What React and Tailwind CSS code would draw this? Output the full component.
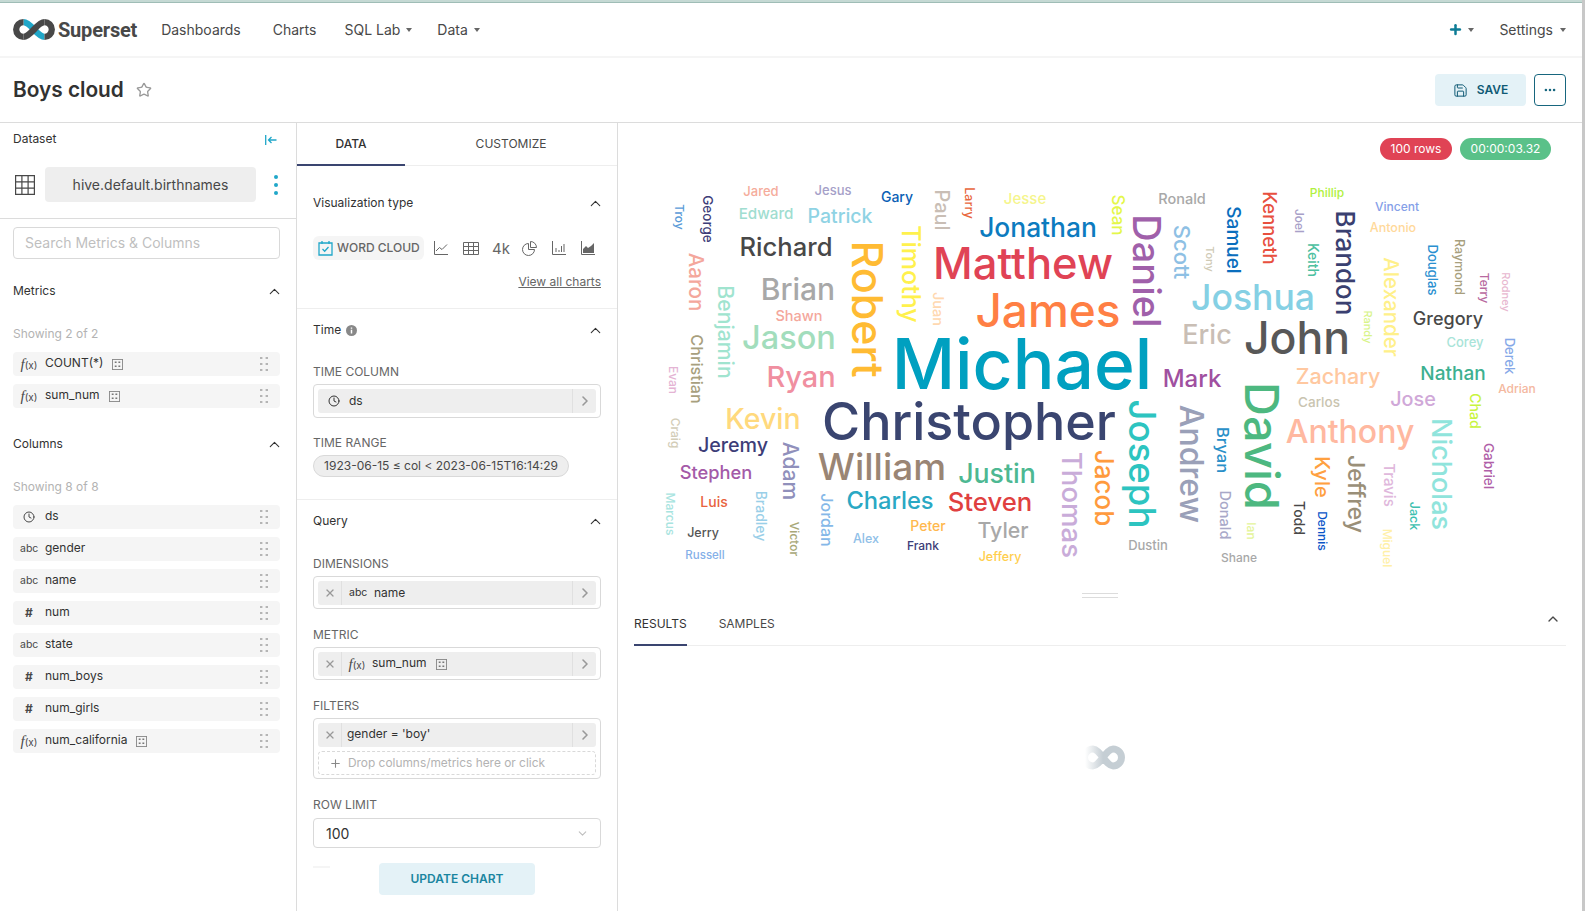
import { ChevronUp, ChevronRight, ChevronDown, Clock, X, Plus, Star, Save, MoreHorizontal } from 'lucide-react'

// text, center x, center y (page coordinates), size, rotated, colour
const words = [
  ['Jared', 761, 191, 13, 0, '#F5AC9B'], ['Jesus', 833, 190, 13, 0, '#A5A0C8'], ['Gary', 897, 197, 14, 0, '#0B5FB5'],
  ['Troy', 679, 217, 12, 1, '#5A9BD8'], ['George', 707, 219, 13.5, 1, '#3D3D78'], ['Edward', 766, 214, 15.2, 0, '#A0DDD0'],
  ['Patrick', 840, 217, 19.5, 0, '#8FD3E4'], ['Paul', 942, 210, 20, 1, '#C9BEB5'], ['Larry', 969, 203, 12.5, 1, '#E8663D'],
  ['Jesse', 1025, 198, 15, 0, '#F5F58C'], ['Sean', 1117, 215, 17, 1, '#E4F74A'], ['Jonathan', 1038, 227, 26.4, 0, '#0C7BBF'],
  ['Richard', 786, 247, 25.6, 0, '#484848'], ['Timothy', 910, 274, 25, 1, '#FFF14D'], ['Robert', 867, 309, 43, 1, '#FFBB33'],
  ['Matthew', 1023, 264, 43.5, 0, '#E04355'], ['Aaron', 696, 282, 20.5, 1, '#F4A79C'], ['Benjamin', 725, 332, 21.2, 1, '#A0E4CF'],
  ['Brian', 798, 289, 30, 0, '#A8A8A8'], ['Juan', 938, 309, 14.5, 1, '#FFD8B0'], ['James', 1048, 310, 46, 0, '#FF7F44'],
  ['Shawn', 799, 316, 14.5, 0, '#F4A79C'], ['Jason', 789, 338, 32.5, 0, '#A2DDBC'], ['Christian', 697, 369, 16.2, 1, '#A89F7E'],
  ['Evan', 673, 380, 12, 1, '#E4B4D4'], ['Michael', 1022, 365, 69.5, 0, '#00A0C0'], ['Ryan', 801, 376, 29, 0, '#F08FA0'],
  ['Kevin', 763, 419, 28.5, 0, '#FFD97D'], ['Craig', 675, 433, 12, 1, '#D3CDB8'], ['Christopher', 969, 422, 52, 0, '#3A4570'],
  ['Jeremy', 733, 446, 19.7, 0, '#3D3D78'], ['Adam', 790, 471, 21, 1, '#9090BB'], ['William', 882, 466, 37, 0, '#9A8574'],
  ['Justin', 997, 473, 26.7, 0, '#4DB892'], ['Stephen', 716, 472, 18.3, 0, '#A45AA8'], ['Thomas', 1071, 505, 27.6, 1, '#C9ACD9'],
  ['Jacob', 1104, 488, 26, 1, '#FF9A3D'], ['Charles', 890, 501, 23.7, 0, '#2AA8C4'], ['Steven', 990, 502, 25.7, 0, '#E04040'],
  ['Marcus', 670, 514, 12, 1, '#A8E4E0'], ['Luis', 714, 502, 14, 0, '#E8623D'], ['Bradley', 761, 516, 14, 1, '#9ACFE8'],
  ['Jordan', 827, 520, 16, 1, '#85B8E8'], ['Peter', 928, 526, 14, 0, '#FFB84D'], ['Tyler', 1003, 531, 21.3, 0, '#A8A8A8'],
  ['Jerry', 703, 533, 12.5, 0, '#555555'], ['Alex', 866, 539, 12.5, 0, '#8FC0E8'], ['Victor', 794, 539, 12, 1, '#A8A878'],
  ['Frank', 923, 546, 12, 0, '#3D3D78'], ['Russell', 705, 556, 11.5, 0, '#85B0E8'], ['Jeffery', 1000, 557, 12.5, 0, '#FFCE4D'],
  ['Ronald', 1182, 199, 14.5, 0, '#A8A8A8'], ['Daniel', 1147, 271, 38, 1, '#A060AA'], ['Scott', 1182, 252, 22, 1, '#8EC0E4'],
  ['Tony', 1209, 259, 11, 1, '#CFCAB5'], ['Samuel', 1233, 240, 19, 1, '#0A6EBD'], ['Kenneth', 1270, 228, 18.5, 1, '#E8503F'],
  ['Joel', 1299, 221, 12, 1, '#A8A0C8'], ['Keith', 1313, 260, 14, 1, '#4DC0A0'], ['Phillip', 1327, 193, 12, 0, '#B0F040'],
  ['Brandon', 1345, 263, 26, 1, '#3A4070'], ['Vincent', 1397, 207, 12, 0, '#85A0E8'], ['Antonio', 1393, 228, 12.5, 0, '#FFD99A'],
  ['Alexander', 1391, 307, 20.5, 1, '#FFF08A'], ['Randy', 1367, 327, 11, 1, '#D8F48A'], ['Douglas', 1432, 270, 13, 1, '#2A90D0'],
  ['Raymond', 1459, 267, 12.5, 1, '#A89F7E'], ['Terry', 1484, 288, 12, 1, '#B86AA0'], ['Rodney', 1505, 292, 11, 1, '#E8B8D0'],
  ['Joshua', 1253, 298, 35.6, 0, '#85D0E4'], ['Gregory', 1448, 319, 18, 0, '#484848'], ['Eric', 1207, 334, 27, 0, '#C9BEB5'],
  ['John', 1297, 338, 44.6, 0, '#585858'], ['Corey', 1465, 342, 13, 0, '#A8E4D8'], ['Derek', 1509, 356, 13, 1, '#85A8E8'],
  ['Nathan', 1453, 373, 19, 0, '#3DB090'], ['Mark', 1192, 379, 24, 0, '#A050A0'], ['Zachary', 1338, 377, 21.5, 0, '#FFC8A0'],
  ['Adrian', 1517, 389, 12, 0, '#F4B8A0'], ['Carlos', 1319, 403, 13.5, 0, '#C9C4B0'], ['Jose', 1413, 400, 19.8, 0, '#D0A8D8'],
  ['Chad', 1475, 411, 14, 1, '#C8F440'], ['David', 1262, 446, 47, 1, '#4DB880'], ['Joseph', 1142, 464, 36.6, 1, '#2DC4C0'],
  ['Andrew', 1191, 464, 32, 1, '#9AA0B8'], ['Bryan', 1223, 450, 16.5, 1, '#2A90C8'], ['Anthony', 1350, 432, 32, 0, '#FFB8A0'],
  ['Nicholas', 1441, 474, 27, 1, '#90E4DC'], ['Gabriel', 1488, 466, 13.5, 1, '#B060A8'], ['Kyle', 1322, 477, 20, 1, '#FFA040'],
  ['Jeffrey', 1355, 494, 23, 1, '#9A8F78'], ['Travis', 1389, 485, 15, 1, '#E0B8DC'], ['Donald', 1225, 515, 14.5, 1, '#A8A8C8'],
  ['Ian', 1251, 531, 12, 1, '#E4F49A'], ['Todd', 1299, 518, 14, 1, '#484848'], ['Dennis', 1322, 531, 12, 1, '#0A55C8'],
  ['Jack', 1414, 516, 12.5, 1, '#3DC0B0'], ['Miguel', 1387, 548, 12, 1, '#FFF0A8'], ['Dustin', 1148, 545, 13, 0, '#A8A8A8'],
  ['Shane', 1239, 558, 12, 0, '#A8A8A8'],
]

const columns = [
  ['clock', 'ds'], ['abc', 'gender'], ['abc', 'name'], ['#', 'num'], ['abc', 'state'], ['#', 'num_boys'], ['#', 'num_girls'], ['fx', 'num_california', true],
]

const Logo = ({ className }) => (
  <svg viewBox="0 0 42 20" className={className} fill="none" strokeWidth="6">
    <path d="M11 3C18 3 24 17 31 17" stroke="#20A7C9" />
    <path d="M11 17C18 17 24 3 31 3" stroke="#484848" />
    <path d="M11 3A7 7 0 0 0 11 17M31 3A7 7 0 0 1 31 17" stroke="#484848" />
  </svg>
)

const Spinner = () => (
  <svg viewBox="0 0 44 25" className="w-[44px] h-[25px]" fill="none" strokeWidth="7">
    <defs>
      <linearGradient id="fade" gradientUnits="userSpaceOnUse" x1="4" y1="0" x2="22" y2="0">
        <stop offset="0" stopColor="#ffffff" />
        <stop offset="1" stopColor="#c5ced4" />
      </linearGradient>
    </defs>
    <path d="M12 4C19 4 25 21 32 21A8.5 8.5 0 0 0 32 4C25 4 19 21 12 21A8.5 8.5 0 0 1 12 4" stroke="url(#fade)" />
  </svg>
)

const Caret = ({ className = 'ml-[6px]' }) => <span className={`${className} inline-block border-x-[3px] border-t-[4px] border-x-transparent border-t-[#666]`} />

const TableBadge = () => (
  <svg viewBox="0 0 12 12" className="w-[11px] h-[11px] shrink-0" fill="none">
    <rect x="0.5" y="0.5" width="11" height="11" stroke="#888" />
    <path d="M3 3.5h2M7 3.5h2M3 8h2M7 8h2" stroke="#777" strokeWidth="1.6" />
  </svg>
)

const Dots = () => (
  <svg viewBox="0 0 8 14" className="w-[8px] h-[14px]" fill="#b5b5b5">
    {[1, 7, 13].map((y) => (
      <g key={y}>
        <rect x="0" y={y - 1} width="2.4" height="2" />
        <rect x="5.6" y={y - 1} width="2.4" height="2" />
      </g>
    ))}
  </svg>
)

const Fx = () => (
  <span className="flex items-baseline text-[#484848] leading-none w-[18px] justify-center">
    <i className="font-['Liberation_Serif',serif] text-[15px]">f</i>
    <span className="text-[10px]">(x)</span>
  </span>
)

const TypeIcon = ({ type }) => {
  if (type === 'clock') return <span className="w-[18px] flex justify-center"><Clock className="w-[12px] h-[12px] text-[#484848]" /></span>
  if (type === 'abc') return <span className="w-[18px] text-center text-[10.5px] text-[#484848]">abc</span>
  if (type === '#') return <span className="w-[18px] text-center text-[12px] font-bold text-[#484848]">#</span>
  return <Fx />
}

const ListRow = ({ type, name, badge }) => (
  <div className="h-[24px] rounded-[4px] bg-[#f5f5f5] flex items-center pl-[7px] pr-[12px] text-[12px] text-[#323232]">
    <TypeIcon type={type} />
    <span className="ml-[7px] -mt-[2px]">{name}</span>
    {badge && <span className="ml-[9px]"><TableBadge /></span>}
    <span className="ml-auto"><Dots /></span>
  </div>
)

const SectionHead = ({ title, extra }) => (
  <div className="flex items-center justify-between h-[16px] text-[12px] text-[#323232]">
    <span className="flex items-center gap-[5px]">{title}{extra}</span>
    <ChevronUp className="w-[17px] h-[17px] -mr-[3px] text-[#323232]" strokeWidth={1.5} />
  </div>
)

const Label = ({ children, className = '' }) => (
  <div className={`h-[16px] leading-[16px] text-[12px] text-[#666] uppercase ${className}`}>{children}</div>
)

const Pill = ({ children, close }) => (
  <div className="h-[24px] rounded-[3px] bg-[#eeeeee] flex items-center text-[12px] text-[#323232]">
    {close && (
      <span className="w-[24px] h-full flex items-center justify-center border-r border-[#e0e0e0]">
        <X className="w-[12px] h-[12px] text-[#999]" strokeWidth={2.5} />
      </span>
    )}
    <div className="flex-1 flex items-center min-w-0">{children}</div>
    <span className="w-[24px] h-full flex items-center justify-center border-l border-[#e0e0e0]">
      <ChevronRight className="w-[16px] h-[16px] text-[#999]" strokeWidth={2.4} />
    </span>
  </div>
)

const Box = ({ children, className = '' }) => (
  <div className={`border border-[#d9d9d9] rounded-[4px] p-[4px] ${className}`}>{children}</div>
)

const ChartIcons = () => (
  <>
    <svg viewBox="0 0 14 14" className="w-[14px] h-[14px]" fill="none" stroke="#666" strokeWidth="1">
      <path d="M.5 0V13.5H14M2 10L5.5 6.5 8 8.5 13 3.5" />
    </svg>
    <svg viewBox="0 0 16 13" className="w-[16px] h-[13px]" fill="none" stroke="#666" strokeWidth="1">
      <path d="M.5.5h15v12H.5zM.5 4.5h15M.5 8.5h15M5.5.5v12M10.5.5v12" />
    </svg>
    <span className="-ml-[2px] text-[15px] text-[#666] leading-none w-[16px]">4k</span>
    <svg viewBox="0 0 15 15" className="-ml-[1px] w-[15px] h-[15px]" fill="none" stroke="#666" strokeWidth="1">
      <path d="M6.5 2.5A6 6 0 1 0 12.5 8.5H6.5z" />
      <path d="M8.5.5A6 6 0 0 1 14.5 6.5H8.5z" />
    </svg>
    <svg viewBox="0 0 14 14" className="w-[14px] h-[14px]" fill="none" stroke="#666" strokeWidth="1">
      <path d="M.5 0V13.5H14M4 11V7M7 11V9M9.5 11V5M12 11V3" />
    </svg>
    <svg viewBox="0 0 14 14" className="w-[14px] h-[14px]" fill="none" stroke="#666" strokeWidth="1">
      <path d="M.5 0V13.5H14" />
      <path d="M2 12V8L5 5 7 7 10 5 13 2V12z" fill="#666" stroke="none" />
    </svg>
  </>
)

const CalendarCheck = () => (
  <svg viewBox="0 0 15 16" className="w-[15px] h-[16px]" fill="none" stroke="#20A7C9" strokeWidth="1.3">
    <path d="M1 3h13v12H1zM4 1v3M11 1v3M4.5 9l2.2 2.2L10.5 7" />
  </svg>
)

const InfoDot = () => (
  <svg viewBox="0 0 12 12" className="w-[11px] h-[11px]">
    <circle cx="6" cy="6" r="6" fill="#888" />
    <path d="M6 5.2V9.2M6 2.8V4" stroke="#fff" strokeWidth="1.6" />
  </svg>
)

export default function App() {
  return (
    <div className="h-[911px] w-full overflow-hidden bg-white font-[Inter,sans-serif] text-[#323232]">
      <div className="h-full border-r-[3px] border-[#c8c8c8] mr-0 flex flex-col">
        {/* Nav */}
        <div className="h-[3px] bg-[#c5d9d4] border-b border-[#9fbdb6]" />
        <header className="h-[53px] flex items-center pl-[12px] pr-[16px] text-[14px] text-[#484848] shrink-0">
          <Logo className="w-[44px] h-[21px]" />
          <span className="ml-[2px] font-[Roboto,sans-serif] font-bold text-[20px] tracking-[-0.2px]">Superset</span>
          <nav className="flex items-center ml-[24px]">
            <span>Dashboards</span>
            <span className="ml-[32px]">Charts</span>
            <span className="ml-[28px] flex items-center">SQL Lab<Caret /></span>
            <span className="ml-[25px] flex items-center">Data<Caret /></span>
          </nav>
          <div className="ml-auto flex items-center">
            <Plus className="w-[15px] h-[15px] text-[#0E7C96]" strokeWidth={4} />
            <Caret className="ml-[5px]" />
            <span className="ml-[25px] flex items-center">Settings<Caret className="ml-[7px]" /></span>
          </div>
        </header>
        <div className="h-[2px] bg-[#f5f5f5] shrink-0" />

        {/* Title bar */}
        <div className="h-[65px] border-b border-[#dcdcdc] flex items-center pl-[13px] pr-[16px] shrink-0">
          <h1 className="text-[20.8px] font-semibold text-[#323232]">Boys cloud</h1>
          <Star className="ml-[12px] w-[16px] h-[16px] text-[#999]" strokeWidth={2} />
          <button className="ml-auto w-[91px] h-[32px] rounded-[4px] bg-[#e4f2f7] flex items-center justify-center gap-[9px] text-[12px] font-semibold text-[#0f5a75]">
            <Save className="w-[15px] h-[15px]" strokeWidth={1.6} />
            SAVE
          </button>
          <button className="ml-[8px] w-[32px] h-[32px] rounded-[4px] border border-[#17667e] flex items-center justify-center">
            <MoreHorizontal className="w-[14px] h-[14px] text-[#17667e]" strokeWidth={2.4} />
          </button>
        </div>

        <div className="flex flex-1 min-h-0">
          {/* Dataset panel */}
          <aside className="w-[297px] shrink-0 border-r border-[#dcdcdc]">
            <div className="h-[96px] border-b border-[#dcdcdc] pl-[13px] pr-[16px] pt-[8px]">
              <div className="flex items-center justify-between h-[16px] text-[12px]">
                <span>Dataset</span>
                <svg viewBox="0 0 12 10" className="w-[12px] h-[10px] mr-[3px] mt-[2px]" fill="none" stroke="#20A7C9" strokeWidth="1.3">
                  <path d="M.7 0V10M11.5 5H3.5M6.5 2L3.5 5l3 3" />
                </svg>
              </div>
              <div className="flex items-center mt-[20px]">
                <svg viewBox="0 0 20 20" className="ml-[2px] w-[20px] h-[20px]" fill="none" stroke="#484848" strokeWidth="1.2">
                  <path d="M.6.6h18.8v18.8H.6zM.6 6.9h18.8M.6 13.1h18.8M6.9.6v18.8M13.1.6v18.8" />
                </svg>
                <div className="ml-[10px] w-[211px] h-[35px] rounded-[4px] bg-[#eeeeee] flex items-center justify-center text-[14px] text-[#484848]">
                  hive.default.birthnames
                </div>
                <div className="ml-[18px] flex flex-col gap-[4px]">
                  {[0, 1, 2].map((i) => <span key={i} className="w-[4px] h-[4px] rounded-full bg-[#20A7C9]" />)}
                </div>
              </div>
            </div>
            <div className="pl-[13px] pr-[16px]">
              <div className="mt-[8px] h-[32px] border border-[#d9d9d9] rounded-[4px] flex items-center px-[11px] pb-[2px] text-[14px] text-[#bfbfbf]">
                Search Metrics &amp; Columns
              </div>
              <div className="mt-[24px]"><SectionHead title="Metrics" /></div>
              <div className="mt-[27px] h-[16px] leading-[16px] text-[12px] text-[#b3b3b3]">Showing 2 of 2</div>
              <div className="mt-[10px] flex flex-col gap-[8px]">
                <ListRow type="fx" name="COUNT(*)" badge />
                <ListRow type="fx" name="sum_num" badge />
              </div>
              <div className="mt-[28px]"><SectionHead title="Columns" /></div>
              <div className="mt-[27px] h-[16px] leading-[16px] text-[12px] text-[#b3b3b3]">Showing 8 of 8</div>
              <div className="mt-[10px] flex flex-col gap-[8px]">
                {columns.map(([type, name, badge]) => <ListRow key={name} type={type} name={name} badge={badge} />)}
              </div>
            </div>
          </aside>

          {/* Controls panel */}
          <section className="w-[321px] shrink-0 border-r border-[#dcdcdc] relative">
            <div className="flex h-[43px] border-b border-[#eeeeee] text-[12px]">
              <div className="w-[108px] h-[43px] flex items-center justify-center border-b-2 border-[#3A4570] font-medium">DATA</div>
              <div className="flex-1 flex items-center justify-center text-[#484848]">CUSTOMIZE</div>
            </div>
            <div className="px-[16px]">
              <div className="mt-[29px]"><SectionHead title="Visualization type" /></div>
              <div className="mt-[25px] flex items-center">
                <div className="w-[111px] h-[24px] rounded-[6px] bg-[#f5f5f5] flex items-center pl-[5px] gap-[4px] text-[12px] font-medium text-[#666]">
                  <CalendarCheck />
                  WORD CLOUD
                </div>
                <div className="flex items-center ml-[10px] gap-[15px]"><ChartIcons /></div>
              </div>
              <div className="mt-[14px] h-[16px] text-right text-[12px] leading-[16px] text-[#666] underline">View all charts</div>
            </div>
            <div className="mt-[18px] border-b border-[#eeeeee]" />
            <div className="px-[16px]">
              <div className="mt-[13px]">
                <SectionHead title="Time" extra={<InfoDot />} />
              </div>
              <Label className="mt-[26px]">Time column</Label>
              <Box className="mt-[4px] h-[34px]">
                <Pill><span className="ml-[10px]"><Clock className="w-[12px] h-[12px]" /></span><span className="ml-[9px]">ds</span></Pill>
              </Box>
              <Label className="mt-[17px]">Time range</Label>
              <div className="mt-[4px] w-[256px] h-[22px] rounded-full bg-[#eeeeee] border border-[#d9d9d9] flex items-center justify-center text-[12px] text-[#484848]">
                1923-06-15 ≤ col &lt; 2023-06-15T16:14:29
              </div>
            </div>
            <div className="mt-[22px] border-b border-[#eeeeee]" />
            <div className="px-[16px]">
              <div className="mt-[13px]"><SectionHead title="Query" /></div>
              <Label className="mt-[27px]">Dimensions</Label>
              <Box className="mt-[4px] h-[33px]">
                <Pill close><span className="w-[18px] ml-[7px] text-[10.5px] text-center">abc</span><span className="ml-[7px]">name</span></Pill>
              </Box>
              <Label className="mt-[18px]">Metric</Label>
              <Box className="mt-[4px] h-[33px]">
                <Pill close><span className="ml-[6px]"><Fx /></span><span className="ml-[6px] -mt-[2px]">sum_num</span><span className="ml-[9px]"><TableBadge /></span></Pill>
              </Box>
              <Label className="mt-[18px]">Filters</Label>
              <Box className="mt-[4px] h-[61px]">
                <Pill close><span className="ml-[5px] -mt-[2px]">gender = 'boy'</span></Pill>
                <div className="mt-[4px] h-[24px] rounded-[4px] border border-dashed border-[#d9d9d9] flex items-center pl-[10px] text-[11.9px] text-[#b3b3b3]">
                  <Plus className="w-[13px] h-[13px] text-[#888] mr-[6px]" strokeWidth={2} />
                  Drop columns/metrics here or click
                </div>
              </Box>
              <Label className="mt-[18px]">Row limit</Label>
              <div className="mt-[5px] h-[30px] border border-[#d9d9d9] rounded-[4px] flex items-center justify-between pl-[12px] pr-[11px] text-[14px] text-[#323232]">
                100
                <ChevronDown className="w-[13px] h-[13px] text-[#bfbfbf]" />
              </div>
              <button className="block mt-[15px] ml-[66px] w-[156px] h-[32px] rounded-[4px] bg-[#e4f2f7] text-[12px] font-semibold text-[#1A85A0]">
                UPDATE CHART
              </button>
            </div>
            <div className="absolute left-[16px] top-[743px] w-[17px] h-[2px] bg-[#f5f5f5]" />
          </section>

          {/* Chart panel */}
          <main className="flex-1 min-w-0 flex flex-col">
            <div className="relative h-[465px] shrink-0">
              {words.map(([text, x, y, size, rot, color]) => (
                <span
                  key={text}
                  className="absolute whitespace-nowrap leading-none font-medium"
                  style={{
                    left: x - 618,
                    top: y - 123,
                    fontSize: size,
                    color,
                    transform: `translate(-50%, -50%)${rot ? ' rotate(90deg)' : ''}`,
                  }}
                >
                  {text}
                </span>
              ))}
              <div className="absolute top-[15px] right-[31px] flex gap-[8px] text-[12px] text-white">
                <span className="w-[72px] h-[22px] rounded-full bg-[#E04355] flex items-center justify-center">100 rows</span>
                <span className="w-[91px] h-[22px] rounded-full bg-[#5AC189] flex items-center justify-center">00:00:03.32</span>
              </div>
            </div>
            <div className="mt-[5px] mx-auto w-[36px] h-[5px] border-y border-[#dcdcdc]" />
            <div className="mx-[16px] mt-[18px] flex items-start justify-between border-b border-[#eeeeee] h-[30px] text-[12px]">
              <div className="flex gap-[32px]">
                <div className="h-[30px] leading-[16px] border-b-2 border-[#3A4570]">RESULTS</div>
                <div className="leading-[16px] text-[#484848]">SAMPLES</div>
              </div>
              <ChevronUp className="-mt-[5px] mr-[5px] w-[16px] h-[16px] text-[#484848]" strokeWidth={2} />
            </div>
            <div className="mt-[99px] flex justify-center pl-[6px]"><Spinner /></div>
          </main>
        </div>
      </div>
    </div>
  )
}
